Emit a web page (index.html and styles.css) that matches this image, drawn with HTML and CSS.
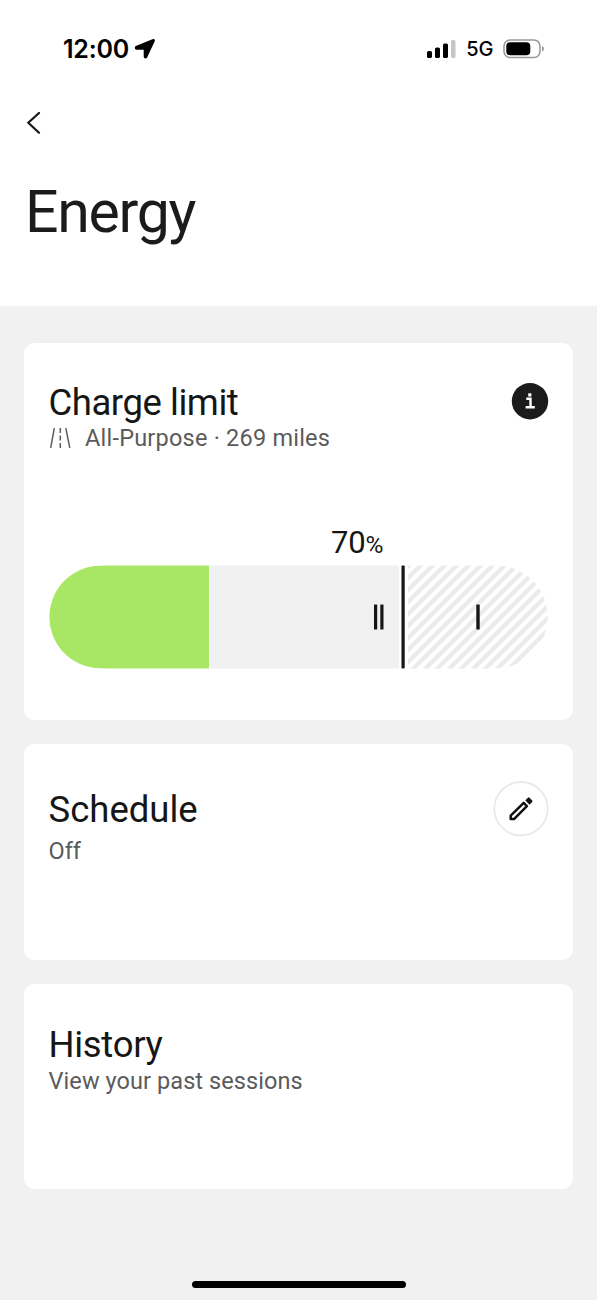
FILE: index.html
```html
<!DOCTYPE html>
<html lang="en">
<head>
<meta charset="utf-8">
<title>Energy</title>
<link rel="stylesheet" href="styles.css">
</head>
<body>
<header class="header">
  <div class="status">
    <div class="status-left">
      <span class="time">12:00</span>
      <svg class="location" width="22" height="22" viewBox="0 0 22 22"><path d="M18.800 2 2.200 8.800c-.9.500-.7 2 .3 2h7.600c.3 0 .5.200.5.500v7.300c0 1.100 1.400 1.300 1.800.3l7.400-15.900c.5-1 .1-1.400-1-1z"/></svg>
    </div>
    <div class="status-right">
      <svg class="signal" width="30" height="20" viewBox="0 0 30 20"><rect x="1" y="12" width="5" height="7" rx="1.6"/><rect x="9" y="8.5" width="5" height="10.5" rx="1.6"/><rect x="17" y="4.5" width="5" height="14.5" rx="1.6"/><rect class="signal-off" x="25" y="1" width="4.5" height="18" rx="1.6"/></svg>
      <span class="network">5G</span>
      <svg class="battery" width="42" height="20" viewBox="0 0 42 20"><rect class="battery-shell" x="1" y="1" width="36" height="17.500" rx="6"/><rect x="3.300" y="3.300" width="24" height="13" rx="4"/><path class="battery-cap" d="M39 7c2.500.8 2.500 4.800 0 5.600z"/></svg>
    </div>
  </div>
  <a class="back" aria-label="Back"><svg width="16" height="22" viewBox="0 0 16 22"><path d="M14 1 3.300 10.800l10.700 9.900"/></svg></a>
  <h1 class="title">Energy</h1>
</header>
<main class="cards">
  <section class="card charge">
    <div class="card-head">
      <div>
        <h2 class="card-title charge-title">Charge limit</h2>
        <p class="card-sub mode"><svg class="road" width="22" height="22" viewBox="0 0 22 22"><path d="M5.300 1.200 1.700 20.800M16.800 1.200l4 19.600M11.300 1v5M11.300 8.500v5M11.300 16v5"/></svg><span class="mode-text">All-Purpose · 269 miles</span></p>
      </div>
      <svg class="info" width="38" height="38" viewBox="0 0 38 38"><circle cx="19" cy="19.200" r="18.200"/><path d="M15.300 16.800h4.200v8.500M14.600 25.300h9.200"/><rect x="17.200" y="11.300" width="3.200" height="3.200"/></svg>
    </div>
    <div class="limit"><span class="limit-num">70</span><span class="limit-unit">%</span></div>
    <svg class="gauge" width="500" height="104" viewBox="0 0 500 104">
      <defs>
        <pattern id="hatch" width="12" height="12" patternUnits="userSpaceOnUse" patternTransform="translate(359 1)">
          <path class="stripe" d="M-3 3 3-3M0 12 12 0M9 15 15 9"/>
        </pattern>
      </defs>
      <path class="charged" d="M160 .5v103H60L46 102.900A51.200 51.200 0 0 1 46 1.100L60 .5z"/>
      <rect class="available" x="160.500" y=".5" width="189.500" height="103"/>
      <path fill="url(#hatch)" d="M359 .5h80l14 .6a51.200 51.200 0 0 1 0 101.800l-14 .6h-80z"/>
      <rect class="mark" x="352.500" y=".5" width="3.200" height="103" rx="1"/>
      <rect class="mark" x="325" y="39.500" width="3.200" height="25" rx=".6"/>
      <rect class="mark" x="331.300" y="39.500" width="3.200" height="25" rx=".6"/>
      <rect class="mark" x="427.300" y="39.500" width="3.400" height="25" rx=".6"/>
    </svg>
  </section>
  <section class="card schedule">
    <div class="card-head">
      <div>
        <h2 class="card-title schedule-title">Schedule</h2>
        <p class="card-sub off">Off</p>
      </div>
      <svg class="edit" width="56" height="56" viewBox="0 0 56 56"><circle cx="28" cy="27.700" r="26.700"/><path class="pencil" d="M17.700 38.100v-3.400L30.700 21.900l3.200 3.200L21 38.100z"/><path class="eraser" d="M32.300 19.300 34.900 16.700q.8-.8 1.600 0l2.700 2.700q.8.800 0 1.600l-2.700 2.700z"/></svg>
    </div>
  </section>
  <section class="card history">
    <h2 class="card-title history-title">History</h2>
    <p class="card-sub past">View your past sessions</p>
  </section>
</main>
<div class="home-indicator"></div>
</body>
</html>
```
FILE: styles.css
```css
* { box-sizing: border-box; }
body {
  margin: 0;
  height: 1300px;
  display: flex;
  flex-direction: column;
  background: #f1f1f1;
  color: #161616;
  font-family: Roboto, "Liberation Sans", sans-serif;
  overflow: hidden;
}
h1, h2, p { margin: 0; font-weight: 400; }
svg { display: block; flex: none; }
.header { height: 306px; background: #fff; padding: 34px 25px 0; }
.status {
  height: 30px;
  display: flex;
  align-items: center;
  justify-content: space-between;
  padding: 0 27px 0 38px;
  color: #000;
  font-family: Inter, sans-serif;
}
.status-left, .status-right { display: flex; align-items: center; }
.time { font-size: 25px; font-weight: 600; line-height: 30px; width: 71px; letter-spacing: -.2px; white-space: nowrap; }
.location path { stroke: #000; stroke-width: 1.8; stroke-linejoin: round; }
.network { font-size: 20px; font-weight: 500; margin: 0 9.500px 0 10px; line-height: 30px; }
.signal-off { fill: #c6c6c6; }
.battery-shell { fill: none; stroke: #999; stroke-width: 1.6; }
.battery-cap { fill: #999; }
.back { display: block; margin-top: 48px; }
.back path { fill: none; stroke: #161616; stroke-width: 2.2; stroke-linecap: round; }
.title { margin-top: 43px; font-size: 59px; line-height: 70px; letter-spacing: -1.300px; color: #1b1b1b; }
.cards { display: flex; flex-direction: column; gap: 24px; padding: 37px 24.500px 0 24px; }
.card { background: #fff; border-radius: 11px; padding: 0 24px 0 24.500px; }
.charge { height: 377px; padding-top: 40px; }
.schedule { height: 216px; padding-top: 37px; }
.history { height: 204.500px; padding-top: 41px; }
.card-head { display: flex; justify-content: space-between; align-items: flex-start; }
.card-title { font-size: 36.500px; line-height: 40px; white-space: nowrap; }
.card-sub { font-size: 23.500px; line-height: 30px; color: #5b5b5b; white-space: nowrap; }
.charge-title { letter-spacing: -.450px; }
.schedule-title { margin-top: 9px; }
.history-title { letter-spacing: -.300px; }
.off { margin-top: 6px; }
.past { margin-top: 1px; letter-spacing: .080px; }
.mode { display: flex; align-items: center; gap: 14.500px; letter-spacing: .220px; }
.mode-text { padding-top: 1px; line-height: 29px; }
.road path { fill: none; stroke: #5b5b5b; stroke-width: 1.5; }
.info { margin-top: -1px; }
.info circle { fill: #1b1b1b; }
.info path { fill: none; stroke: #fff; stroke-width: 2.4; }
.info rect { fill: #fff; }
.limit { margin: 72px 0 0 282.500px; height: 40px; line-height: 35px; white-space: nowrap; }
.limit-num { font-size: 31px; letter-spacing: -.200px; }
.limit-unit { font-size: 24.500px; }
.charged { fill: #a8e766; }
.available { fill: #f1f1f1; }
.stripe { fill: none; stroke: #ebebeb; stroke-width: 4.200; }
.mark { fill: #161616; }
.edit circle { fill: #fff; stroke: #e9e9e9; stroke-width: 1.800; }
.pencil { fill: none; stroke: #111; stroke-width: 2.500; stroke-linejoin: round; }
.eraser { fill: #111; }
.home-indicator { width: 214px; height: 7px; border-radius: 4px; background: #000; margin: auto auto 12px 191.500px; }
```
